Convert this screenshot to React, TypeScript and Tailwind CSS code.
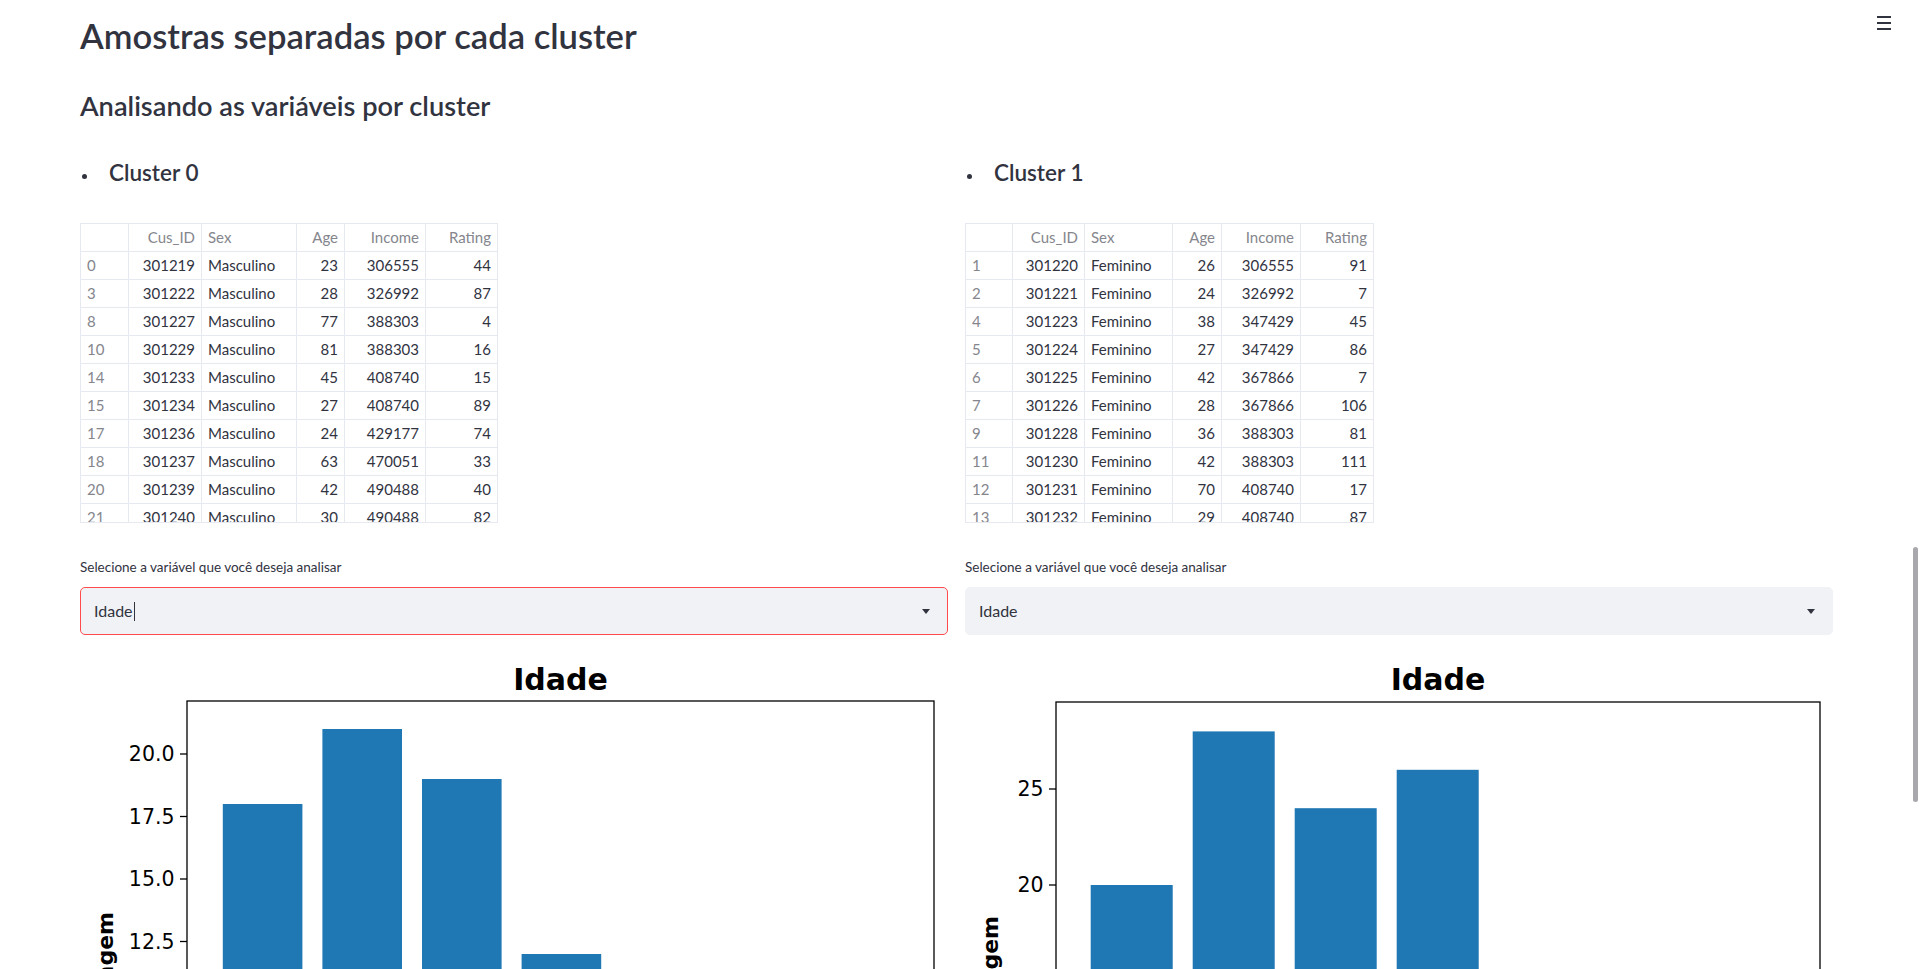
const font = "font-['Lato','Liberation_Sans',sans-serif]";

const cluster0 = [
  ['0', '301219', 'Masculino', '23', '306555', '44'],
  ['3', '301222', 'Masculino', '28', '326992', '87'],
  ['8', '301227', 'Masculino', '77', '388303', '4'],
  ['10', '301229', 'Masculino', '81', '388303', '16'],
  ['14', '301233', 'Masculino', '45', '408740', '15'],
  ['15', '301234', 'Masculino', '27', '408740', '89'],
  ['17', '301236', 'Masculino', '24', '429177', '74'],
  ['18', '301237', 'Masculino', '63', '470051', '33'],
  ['20', '301239', 'Masculino', '42', '490488', '40'],
  ['21', '301240', 'Masculino', '30', '490488', '82'],
];

const cluster1 = [
  ['1', '301220', 'Feminino', '26', '306555', '91'],
  ['2', '301221', 'Feminino', '24', '326992', '7'],
  ['4', '301223', 'Feminino', '38', '347429', '45'],
  ['5', '301224', 'Feminino', '27', '347429', '86'],
  ['6', '301225', 'Feminino', '42', '367866', '7'],
  ['7', '301226', 'Feminino', '28', '367866', '106'],
  ['9', '301228', 'Feminino', '36', '388303', '81'],
  ['11', '301230', 'Feminino', '42', '388303', '111'],
  ['12', '301231', 'Feminino', '70', '408740', '17'],
  ['13', '301232', 'Feminino', '29', '408740', '87'],
];

const headers = ['', 'Cus_ID', 'Sex', 'Age', 'Income', 'Rating'];

const DataTable = ({ rows, cols }: { rows: string[][]; cols: string }) => {
  return (
    <div className="h-[300px] w-fit overflow-hidden border-b border-[#e6e9ef]">
      <div className={`grid ${cols} border-l border-t border-[#e6e9ef] text-[15px]`}>
        {headers.map((h, i) => (
          <div
            key={'h' + i}
            className={`h-[28px] px-[6px] flex items-center border-r border-b border-[#e6e9ef] text-[#85868d] ${
              i === 0 || i === 2 ? 'justify-start' : 'justify-end'
            }`}
          >
            {h}
          </div>
        ))}
        {rows.map((r, ri) =>
          r.map((c, ci) => (
            <div
              key={ri + '-' + ci}
              className={`h-[28px] px-[6px] flex items-center border-r border-b border-[#e6e9ef] ${
                ci === 0 ? 'text-[#85868d]' : 'text-[#31333f]'
              } ${ci === 0 || ci === 2 ? 'justify-start' : 'justify-end'}`}
            >
              {c}
            </div>
          ))
        )}
      </div>
    </div>
  );
};

type ChartProps = {
  axLeft: number;
  axRight: number;
  axTop: number;
  zeroY: number;
  k: number;
  ticks: number[];
  decimals: number;
  bars: number[];
  barX0: number;
  pitch: number;
  barW: number;
  labelEnd: number;
};

const Chart = (p: ChartProps) => {
  const y = (v: number) => p.zeroY - v * p.k;
  const cx = (p.axLeft + p.axRight) / 2;
  return (
    <svg width="868" height="680" viewBox="0 0 868 680" className="block">
      <text
        x={cx}
        y={40}
        textAnchor="middle"
        fontSize="30"
        fontWeight="bold"
        fontFamily="'DejaVu Sans', sans-serif"
        fill="#000"
      >
        Idade
      </text>
      {p.bars.map((v, i) => (
        <rect key={i} x={p.barX0 + i * p.pitch} y={y(v)} width={p.barW} height={p.zeroY - y(v)} fill="#1f77b4" />
      ))}
      <rect
        x={p.axLeft}
        y={p.axTop}
        width={p.axRight - p.axLeft}
        height={p.zeroY - p.axTop}
        fill="none"
        stroke="#000"
        strokeWidth="1.3"
      />
      {p.ticks.map((t) => (
        <g key={t}>
          <line x1={p.axLeft - 7} x2={p.axLeft} y1={y(t)} y2={y(t)} stroke="#000" strokeWidth="1.3" />
          <text
            x={p.axLeft - 12.5}
            y={y(t)}
            textAnchor="end"
            dominantBaseline="central"
            fontSize="20.5"
            fontFamily="'DejaVu Sans', sans-serif"
            fill="#000"
          >
            {t.toFixed(p.decimals)}
          </text>
        </g>
      ))}
      <text
        transform={`translate(33 ${p.labelEnd}) rotate(-90)`}
        textAnchor="end"
        fontSize="22"
        fontWeight="bold"
        fontFamily="'DejaVu Sans', sans-serif"
        fill="#000"
      >
        Contagem
      </text>
    </svg>
  );
};

const Select = ({ focused }: { focused?: boolean }) => (
  <div
    className={`mt-[10px] h-[48px] rounded-[5px] bg-[#f0f2f6] border flex items-center justify-between pl-[13px] pr-[17px] ${
      focused ? 'border-[#ff4b4b]' : 'border-[#f0f2f6]'
    }`}
  >
    <div className="flex items-center text-[16px] text-[#31333f]">
      <span>Idade</span>
      {focused && <span className="ml-[1px] w-[1px] h-[19px] bg-[#31333f]" />}
    </div>
    <svg width="8" height="5" viewBox="0 0 8 5">
      <path d="M0 0 L8 0 L4 5 Z" fill="#31333f" />
    </svg>
  </div>
);

const ClusterColumn = ({
  name,
  rows,
  cols,
  focused,
  chart,
}: {
  name: string;
  rows: string[][];
  cols: string;
  focused?: boolean;
  chart: ChartProps;
}) => (
  <div className="flex flex-col">
    <div className="mt-[34px] h-[30px] flex items-start">
      <span className="ml-[2px] mt-[16px] w-[5px] h-[5px] rounded-full bg-[#31333f]" />
      <span className="ml-[22px] text-[22.5px] leading-[30px] font-semibold text-[#31333f]">{name}</span>
    </div>
    <div className="mt-[35px]">
      <DataTable rows={rows} cols={cols} />
    </div>
    <div className="mt-[34px] h-[20px] leading-[20px] text-[13.5px] text-[#31333f]">
      Selecione a variável que você deseja analisar
    </div>
    <Select focused={focused} />
    <div className="mt-[15px]">
      <Chart {...chart} />
    </div>
  </div>
);

export default function App() {
  return (
    <div className={`relative h-screen overflow-hidden bg-white ${font}`}>
      <div className="pl-20 pr-[86px]">
        <h2 className="mt-[13px] h-[46px] text-[34.6px] leading-[46px] font-semibold text-[#31333f]">
          Amostras separadas por cada cluster
        </h2>
        <h3 className="mt-[29px] h-[36px] text-[27.2px] leading-[36px] font-semibold text-[#31333f]">
          Analisando as variáveis por cluster
        </h3>
        <div className="grid grid-cols-2 gap-[17px]">
          <ClusterColumn
            name="Cluster 0"
            rows={cluster0}
            cols="grid-cols-[48px_73px_95px_48px_81px_72px]"
            focused
            chart={{
              axLeft: 107,
              axRight: 854,
              axTop: 51,
              zeroY: 604,
              k: 25,
              ticks: [0, 2.5, 5, 7.5, 10, 12.5, 15, 17.5, 20],
              decimals: 1,
              bars: [18, 21, 19, 12, 10, 8, 6],
              barX0: 142.8,
              pitch: 99.6,
              barW: 79.6,
              labelEnd: 262,
            }}
          />
          <ClusterColumn
            name="Cluster 1"
            rows={cluster1}
            cols="grid-cols-[47px_72px_88px_49px_79px_73px]"
            chart={{
              axLeft: 91,
              axRight: 855,
              axTop: 52,
              zeroY: 619,
              k: 19.2,
              ticks: [0, 5, 10, 15, 20, 25],
              decimals: 0,
              bars: [20, 28, 24, 26, 1, 1, 0],
              barX0: 125.7,
              pitch: 102,
              barW: 82,
              labelEnd: 266,
            }}
          />
        </div>
      </div>

      {/* header menu */}
      <div className="absolute top-[16px] left-[1877px] flex flex-col gap-[4px]">
        <span className="block w-[14px] h-[2px] bg-[#31333f]" />
        <span className="block w-[14px] h-[2px] bg-[#31333f]" />
        <span className="block w-[14px] h-[2px] bg-[#31333f]" />
      </div>

      {/* scrollbar thumb */}
      <div className="absolute right-[1px] top-[547px] w-[5px] h-[255px] rounded-full bg-[#a8a8ad]" />
    </div>
  );
}
